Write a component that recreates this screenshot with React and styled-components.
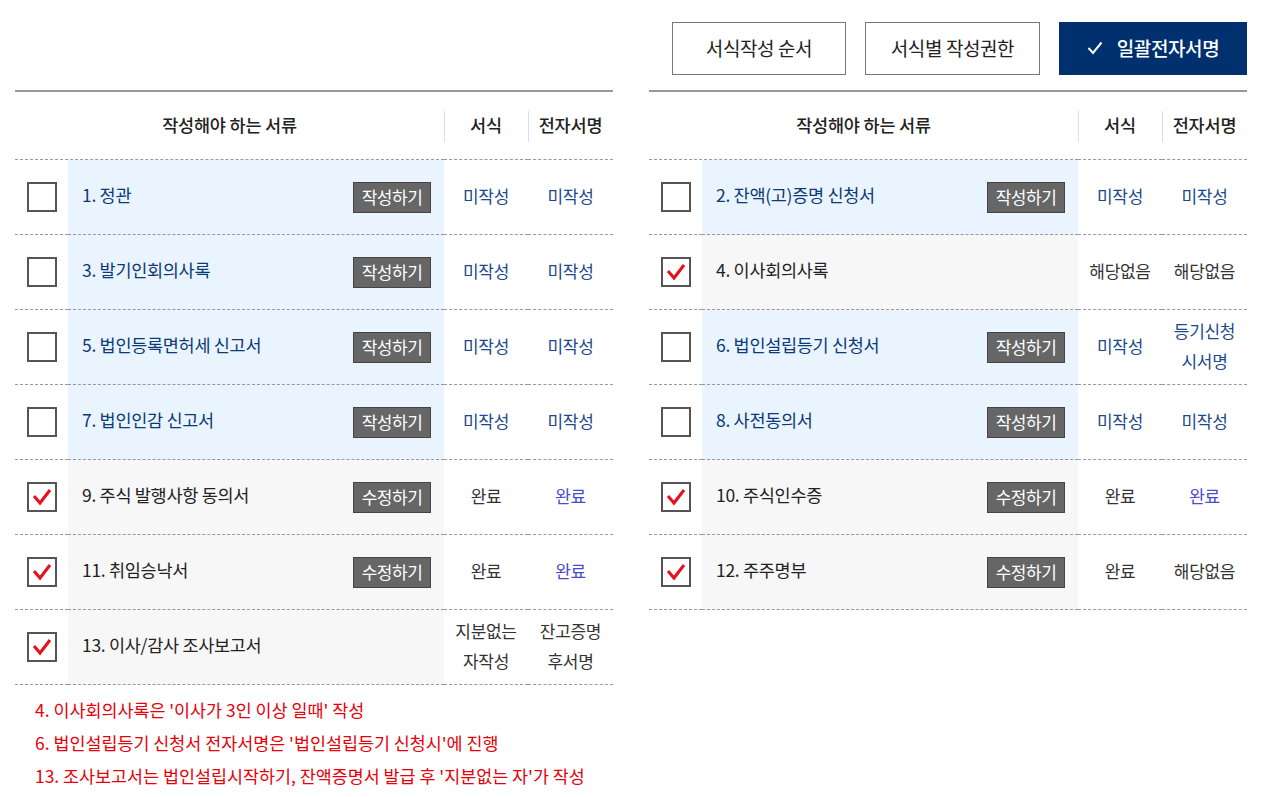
import React from "react";
import styled, { createGlobalStyle } from "styled-components";

const Global = createGlobalStyle`
  html, body { margin: 0; padding: 0; background: #fff; }
  body { font-family: "Noto Sans CJK KR", "Noto Sans", sans-serif; color: #222; }
  * { box-sizing: border-box; }
`;

const Page = styled.div`
  width: 1247px;
  padding: 22px 0 0 15px;
`;

const Toolbar = styled.div`
  display: flex;
  justify-content: flex-end;
  gap: 19px;
  margin-bottom: 15px;
`;

const TopButton = styled.button`
  height: 53px;
  width: ${(p) => p.$w}px;
  border: 1px solid ${(p) => (p.$primary ? "#00306e" : "#777")};
  background: ${(p) => (p.$primary ? "#00306e" : "#fff")};
  color: ${(p) => (p.$primary ? "#fff" : "#222")};
  font-family: inherit;
  font-size: 19px;
  font-weight: ${(p) => (p.$primary ? 500 : 400)};
  letter-spacing: -0.4px;
  display: flex;
  align-items: center;
  justify-content: center;
  gap: 14px;
  padding: 0 0 2px;
`;

const Tables = styled.div`
  display: flex;
  gap: 36px;
  align-items: flex-start;
`;

const Column = styled.div`
  width: 598px;
`;

const Table = styled.div`
  border-top: 2px solid #999;
  display: grid;
  grid-template-columns: 53px 376px 84px 85px;
`;

const HeadCell = styled.div`
  grid-column: ${(p) => p.$span || "auto"};
  height: 68px;
  display: flex;
  align-items: center;
  justify-content: center;
  font-size: 17.5px;
  font-weight: 500;
  letter-spacing: -0.2px;
  color: #222;
  position: relative;
  padding-bottom: 3px;
  border-bottom: 1px dashed #999;
  ${(p) =>
    p.$sep &&
    `&::before { content: ""; position: absolute; left: 0; top: 19px; height: 31px; width: 1px; background: #ddd; }`}
`;

const CheckCell = styled.div`
  height: 75px;
  display: flex;
  align-items: center;
  justify-content: center;
  padding-left: 1px;
  border-bottom: 1px dashed #999;
`;

const Box = styled.div`
  width: 30px;
  height: 30px;
  border: 2px solid #555;
  background: #fff;
  display: flex;
  align-items: center;
  justify-content: center;
`;

const NameCell = styled.div`
  height: 75px;
  background: ${(p) => (p.$done ? "#f7f7f7" : "#eaf4fe")};
  display: flex;
  align-items: center;
  justify-content: space-between;
  padding: 0 13px 0 14px;
  border-bottom: 1px dashed #999;
`;

const Name = styled.span`
  font-size: 17.5px;
  letter-spacing: -0.3px;
  color: ${(p) => (p.$done ? "#222" : "#0b3a78")};
  margin-top: -5px;
`;

const ActionButton = styled.button`
  width: 78px;
  height: 31px;
  background: #666;
  border: 1px solid #444;
  color: #fff;
  font-family: inherit;
  font-size: 17px;
  letter-spacing: -0.5px;
  padding: 0 0 1px;
  display: flex;
  align-items: center;
  justify-content: center;
`;

const StatusCell = styled.div`
  height: 75px;
  display: flex;
  align-items: center;
  justify-content: center;
  text-align: center;
  font-size: 17px;
  letter-spacing: -0.3px;
  line-height: 30px;
  white-space: pre-line;
  color: ${(p) =>
    p.$tone === "blue" ? "#1c4a8a" : p.$tone === "purple" ? "#4a4ad0" : "#333"};
  border-bottom: 1px dashed #999;
  padding-bottom: 3px;
`;

const Notes = styled.div`
  padding: 8px 0 0 20px;
`;

const Note = styled.p`
  margin: 0;
  color: #e6000a;
  font-size: 17.4px;
  line-height: 33px;
  letter-spacing: 0;
  white-space: nowrap;
`;

const Check = () => (
  <svg width="20" height="18" viewBox="0 0 20 18">
    <polyline
      points="2,8 8,15 18,2"
      fill="none"
      stroke="#e8101a"
      strokeWidth="3"
      strokeLinejoin="miter"
    />
  </svg>
);

const left = [
  { n: "1. 정관", done: false, btn: "작성하기", a: ["미작성", "blue"], b: ["미작성", "blue"] },
  { n: "3. 발기인회의사록", done: false, btn: "작성하기", a: ["미작성", "blue"], b: ["미작성", "blue"] },
  { n: "5. 법인등록면허세 신고서", done: false, btn: "작성하기", a: ["미작성", "blue"], b: ["미작성", "blue"] },
  { n: "7. 법인인감 신고서", done: false, btn: "작성하기", a: ["미작성", "blue"], b: ["미작성", "blue"] },
  { n: "9. 주식 발행사항 동의서", done: true, btn: "수정하기", a: ["완료", "dark"], b: ["완료", "purple"] },
  { n: "11. 취임승낙서", done: true, btn: "수정하기", a: ["완료", "dark"], b: ["완료", "purple"] },
  { n: "13. 이사/감사 조사보고서", done: true, btn: null, a: ["지분없는\n자작성", "dark"], b: ["잔고증명\n후서명", "dark"] },
];

const right = [
  { n: "2. 잔액(고)증명 신청서", done: false, btn: "작성하기", a: ["미작성", "blue"], b: ["미작성", "blue"] },
  { n: "4. 이사회의사록", done: true, btn: null, a: ["해당없음", "dark"], b: ["해당없음", "dark"] },
  { n: "6. 법인설립등기 신청서", done: false, btn: "작성하기", a: ["미작성", "blue"], b: ["등기신청\n시서명", "blue"] },
  { n: "8. 사전동의서", done: false, btn: "작성하기", a: ["미작성", "blue"], b: ["미작성", "blue"] },
  { n: "10. 주식인수증", done: true, btn: "수정하기", a: ["완료", "dark"], b: ["완료", "purple"] },
  { n: "12. 주주명부", done: true, btn: "수정하기", a: ["완료", "dark"], b: ["해당없음", "dark"] },
];

const DocTable = ({ rows }) => (
  <Table>
    <HeadCell $span="1 / 3">작성해야 하는 서류</HeadCell>
    <HeadCell $sep>서식</HeadCell>
    <HeadCell $sep>전자서명</HeadCell>
    {rows.map((r) => (
      <React.Fragment key={r.n}>
        <CheckCell>
          <Box>{r.done && <Check />}</Box>
        </CheckCell>
        <NameCell $done={r.done}>
          <Name $done={r.done}>{r.n}</Name>
          {r.btn && <ActionButton>{r.btn}</ActionButton>}
        </NameCell>
        <StatusCell $tone={r.a[1]}>{r.a[0]}</StatusCell>
        <StatusCell $tone={r.b[1]}>{r.b[0]}</StatusCell>
      </React.Fragment>
    ))}
  </Table>
);

export default function App() {
  return (
    <>
      <Global />
      <Page>
        <Toolbar>
          <TopButton $w={174}>서식작성 순서</TopButton>
          <TopButton $w={175}>서식별 작성권한</TopButton>
          <TopButton $w={188} $primary>
            <svg width="16" height="14" viewBox="0 0 16 14">
              <polyline points="1.5,7 6,12 14.5,1.5" fill="none" stroke="#fff" strokeWidth="2" />
            </svg>
            일괄전자서명
          </TopButton>
        </Toolbar>
        <Tables>
          <Column>
            <DocTable rows={left} />
            <Notes>
              <Note>4. 이사회의사록은 '이사가 3인 이상 일때' 작성</Note>
              <Note>6. 법인설립등기 신청서 전자서명은 '법인설립등기 신청시'에 진행</Note>
              <Note>13. 조사보고서는 법인설립시작하기, 잔액증명서 발급 후 '지분없는 자'가 작성</Note>
            </Notes>
          </Column>
          <Column>
            <DocTable rows={right} />
          </Column>
        </Tables>
      </Page>
    </>
  );
}
